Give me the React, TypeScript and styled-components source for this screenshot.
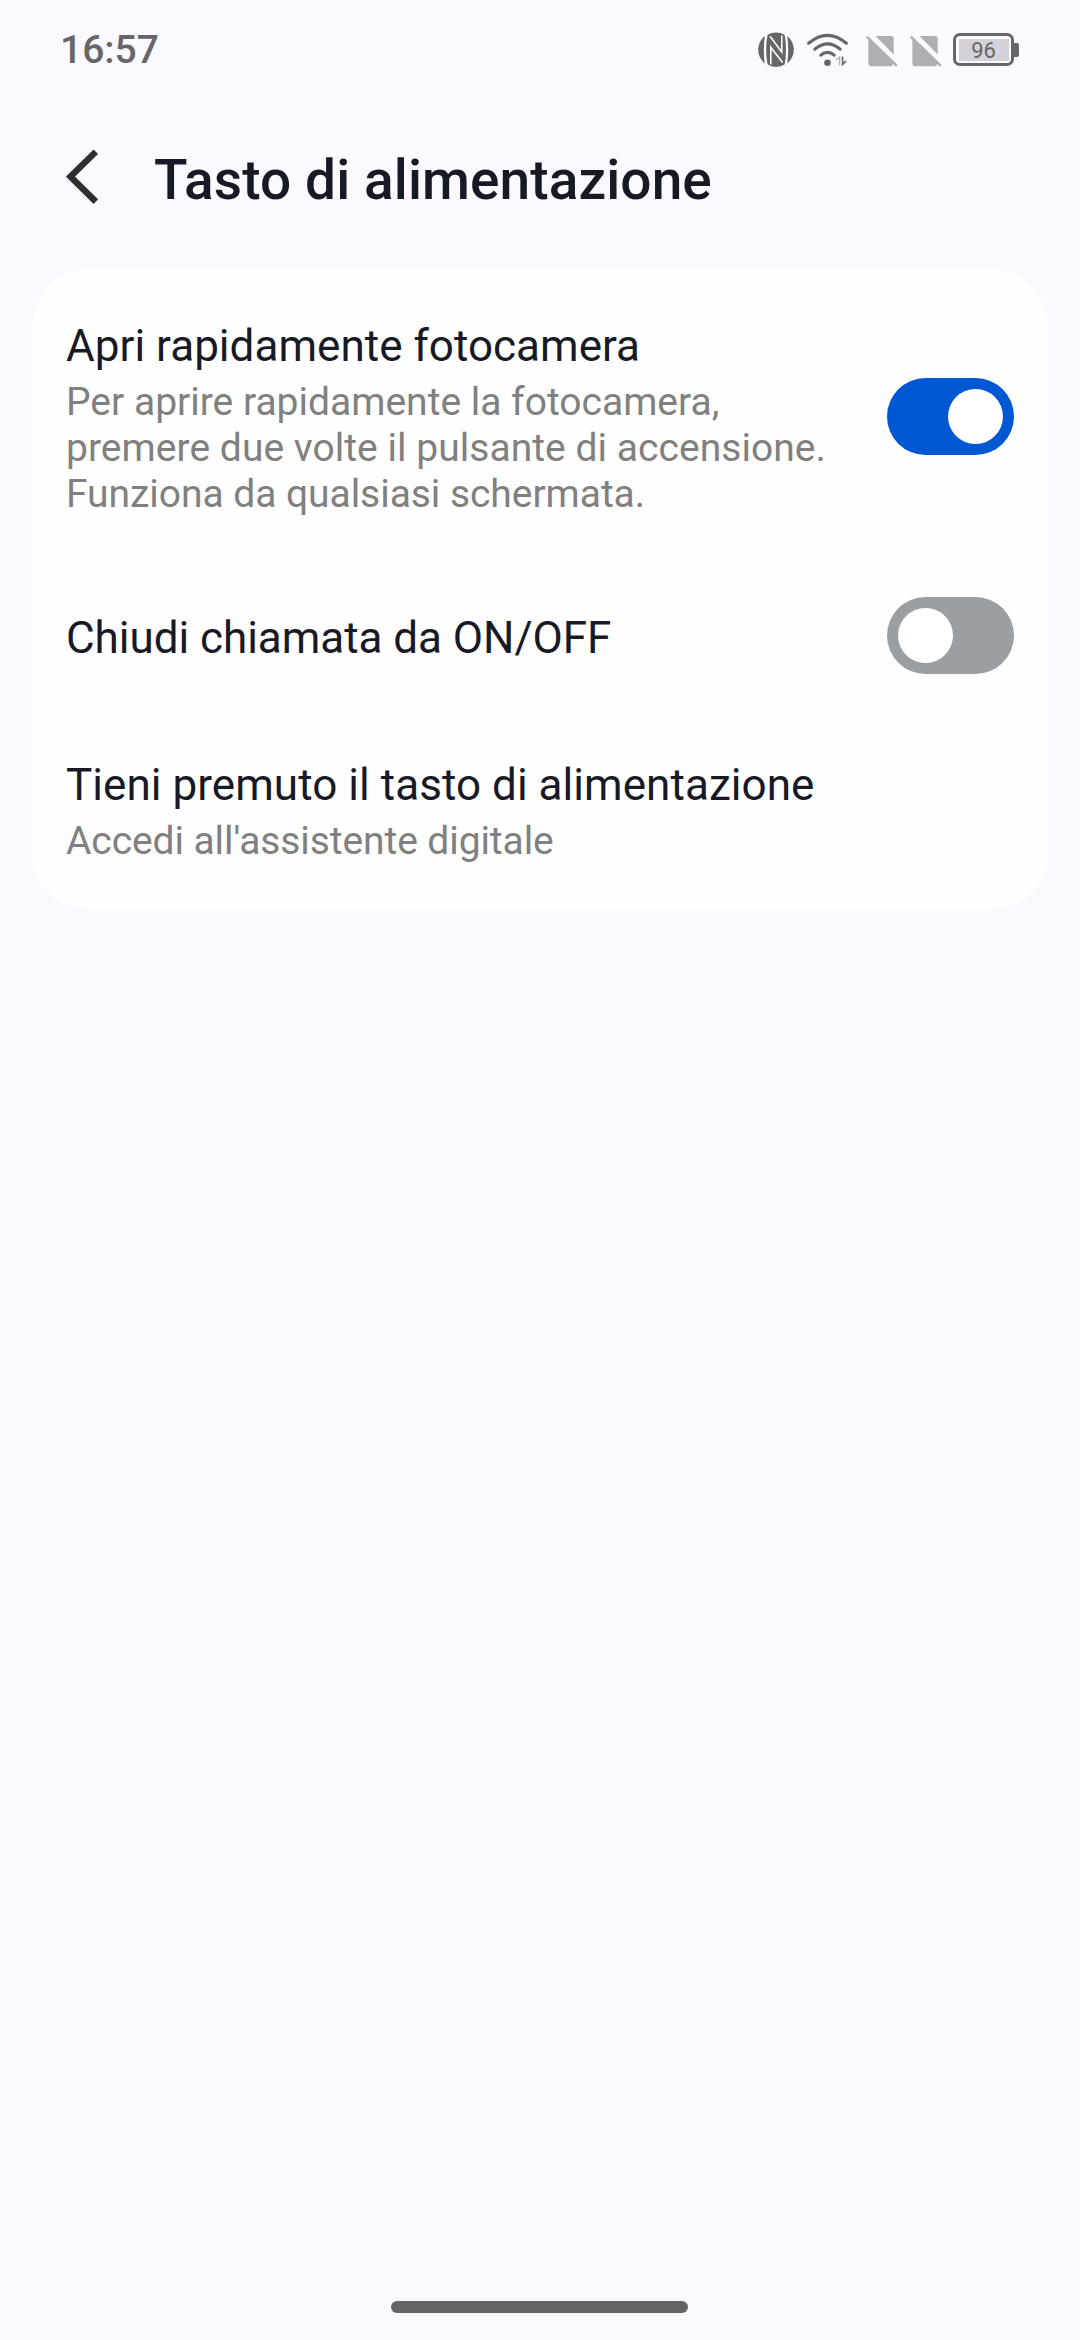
import React, { useState } from "react";
import styled, { createGlobalStyle } from "styled-components";

const GlobalStyle = createGlobalStyle`
  * { box-sizing: border-box; }
  body { margin: 0; background: #f9f9ff; }
`;

const Screen = styled.div`
  width: 1080px;
  height: 2340px;
  display: flex;
  flex-direction: column;
  background: #f9f9ff;
  font-family: Roboto, "Noto Sans", sans-serif;
  color: #171925;
  overflow: hidden;
`;

const StatusBar = styled.header`
  height: 99px;
  padding: 0 61px 0 60px;
  display: flex;
  align-items: center;
  justify-content: space-between;
  color: #666668;
`;

const Clock = styled.time`
  font-size: 39px;
  font-weight: 500;
  line-height: 46px;
`;

const StatusIcons = styled.div`
  height: 59px;
  display: flex;
  align-items: center;

  svg { display: block; }
`;

const TitleBar = styled.div`
  height: 171px;
  padding: 0 66px;
  display: flex;
  align-items: flex-start;
`;

const BackButton = styled.button`
  width: 88px;
  padding: 50px 0 0;
  border: 0;
  background: none;
  svg { display: block; }
`;

const PageTitle = styled.h1`
  margin: 0;
  padding-top: 48px;
  font-size: 55px;
  font-weight: 500;
  line-height: 66px;
  letter-spacing: 0.1px;
  white-space: nowrap;
`;

const Card = styled.main`
  margin: 0 33px;
  height: 639px;
  border-radius: 54px;
  background: #fefefe;
  display: flex;
  flex-direction: column;
`;

const Row = styled.section<{ $height: number }>`
  height: ${(p) => p.$height}px;
  padding: 50px 33px 0;
  display: flex;
  justify-content: space-between;
`;

const RowText = styled.div`
  display: flex;
  flex-direction: column;
`;

const RowTitle = styled.h2<{ $tracking: number }>`
  margin: 0;
  font-size: 44px;
  font-weight: 400;
  line-height: 52px;
  letter-spacing: ${(p) => p.$tracking}px;
  white-space: nowrap;
`;

const Summary = styled.p`
  margin: 7px 0 0;
  font-size: 39px;
  line-height: 46px;
  color: #808080;
`;

const SummaryLine = styled.span<{ $tracking: number }>`
  display: block;
  letter-spacing: ${(p) => p.$tracking}px;
  white-space: nowrap;
`;

const Switch = styled.button<{ $on: boolean; $offset: number }>`
  flex: none;
  width: 127px;
  height: 77px;
  margin-top: ${(p) => p.$offset}px;
  padding: 11px;
  border: 0;
  border-radius: 39px;
  display: flex;
  justify-content: ${(p) => (p.$on ? "flex-end" : "flex-start")};
  background: ${(p) => (p.$on ? "#0057d3" : "#9a9fa3")};
`;

const Knob = styled.span`
  width: 55px;
  height: 55px;
  border-radius: 50%;
  background: #fff;
`;

const NavigationArea = styled.footer`
  margin-top: auto;
  height: 39px;
  display: flex;
  justify-content: center;
`;

const HomeHandle = styled.div`
  width: 297px;
  height: 12px;
  margin-right: 1px;
  border-radius: 6px;
  background: #656567;
`;

const NfcIcon = () => (
  <svg width="50" height="59" viewBox="754 20 50 59" fill="#666668">
    <path d="M764.8 36A17.5 17.5 0 0 0 764.8 63.4Q763.8 57 763.8 49.7Q763.8 42 764.8 36Z" />
    <path d="M787.2 36A17.5 17.5 0 0 1 787.2 63.4Q788.2 57 788.2 49.7Q788.2 42 787.2 36Z" />
    <path d="M767.6 34.8Q771.5 32.4 776 32.4Q781 32.4 784.6 34.8Q786 41 786 49.7Q786 58 784.6 64.6Q781 67 776 67Q771 67 767.6 64.6Q766.2 58 766.2 49.7Q766.2 41 767.6 34.8Z" />
    <path d="M770.8 64.5V47.4L782.6 62.6M781.8 35.5V52L770 36.2" fill="none" stroke="#f9f9ff" strokeWidth="1.6" />
  </svg>
);

const WifiIcon = () => (
  <svg width="60" height="59" viewBox="804 20 60 59" fill="none" stroke="#666668" strokeLinecap="round">
    <path d="M808.6 43.2Q827.5 27.4 846.4 43.2" strokeWidth="3.1" />
    <path d="M814.8 49.2Q827.5 38.4 840.2 49.2" strokeWidth="3.1" />
    <path d="M820.8 55.2Q827.5 49.4 834.2 55.2" strokeWidth="3.1" />
    <circle cx="827.5" cy="62.8" r="3.3" fill="#666668" stroke="none" />
    <path d="M836 60L839.6 57V65.4" stroke="#b7b7bb" strokeWidth="1.5" strokeLinecap="butt" />
    <path d="M842.6 56.6V64.4L846 61.2" strokeWidth="1.6" strokeLinecap="butt" />
  </svg>
);

const NoSimIcon = () => (
  <svg width="44" height="59" viewBox="864 20 44 59" fill="#aeaeb3">
    <path d="M875.6 36H891.2Q893.7 36 893.7 38.5V54.6Z" />
    <path d="M868.4 38.6L893.4 63.6Q893 66.2 890.8 66.2H871Q868.4 66.2 868.4 63.6Z" />
    <path d="M866.8 36.6L896.8 65.8" stroke="#aeaeb3" strokeWidth="2.4" />
  </svg>
);

const Battery = styled.div`
  margin-left: 1px;
  display: flex;
  align-items: center;
`;

const BatteryBody = styled.div`
  width: 61px;
  height: 33px;
  padding: 2.5px;
  border: 3px solid #666668;
  border-radius: 7px;
`;

const BatteryLevel = styled.div`
  height: 22px;
  background: #d5d1d9;
  font-size: 22px;
  line-height: 23px;
  text-align: center;
`;

const BatteryTip = styled.div`
  width: 5px;
  height: 14px;
  border-radius: 0 2px 2px 0;
  background: #666668;
`;

type Line = { text: string; tracking?: number };

type SettingProps = {
  title: Line;
  summary?: Line[];
  height: number;
  switchOffset?: number;
  initial?: boolean;
};

function Setting({ title, summary, height, switchOffset = 0, initial }: SettingProps) {
  const [on, setOn] = useState(initial);
  return (
    <Row $height={height}>
      <RowText>
        <RowTitle $tracking={title.tracking ?? 0}>{title.text}</RowTitle>
        {summary && (
          <Summary>
            {summary.map((line) => (
              <SummaryLine key={line.text} $tracking={line.tracking ?? 0}>
                {line.text}
              </SummaryLine>
            ))}
          </Summary>
        )}
      </RowText>
      {on !== undefined && (
        <Switch
          role="switch"
          aria-checked={on}
          aria-label={title.text}
          $on={on}
          $offset={switchOffset}
          onClick={() => setOn(!on)}
        >
          <Knob />
        </Switch>
      )}
    </Row>
  );
}

export default function App() {
  return (
    <>
      <GlobalStyle />
      <Screen>
        <StatusBar>
          <Clock>16:57</Clock>
          <StatusIcons>
            <NfcIcon />
            <WifiIcon />
            <NoSimIcon />
            <NoSimIcon />
            <Battery>
              <BatteryBody>
                <BatteryLevel>96</BatteryLevel>
              </BatteryBody>
              <BatteryTip />
            </Battery>
          </StatusIcons>
        </StatusBar>
        <TitleBar>
          <BackButton aria-label="Indietro">
            <svg width="34" height="56" viewBox="66 149 34 56" fill="none" stroke="#2f2f2f" strokeWidth="6.4">
              <path d="M95.8 151.8L70.4 176.6L95.8 201.6" />
            </svg>
          </BackButton>
          <PageTitle>Tasto di alimentazione</PageTitle>
        </TitleBar>
        <Card>
          <Setting
            title={{ text: "Apri rapidamente fotocamera", tracking: 0.03 }}
            summary={[
              { text: "Per aprire rapidamente la fotocamera," },
              { text: "premere due volte il pulsante di accensione.", tracking: 0.04 },
              { text: "Funziona da qualsiasi schermata.", tracking: -0.05 },
            ]}
            height={292}
            switchOffset={58}
            initial={true}
          />
          <Setting
            title={{ text: "Chiudi chiamata da ON/OFF", tracking: -0.04 }}
            height={147}
            switchOffset={-15}
            initial={false}
          />
          <Setting
            title={{ text: "Tieni premuto il tasto di alimentazione", tracking: 0.05 }}
            summary={[{ text: "Accedi all'assistente digitale", tracking: -0.09 }]}
            height={200}
          />
        </Card>
        <NavigationArea>
          <HomeHandle />
        </NavigationArea>
      </Screen>
    </>
  );
}
